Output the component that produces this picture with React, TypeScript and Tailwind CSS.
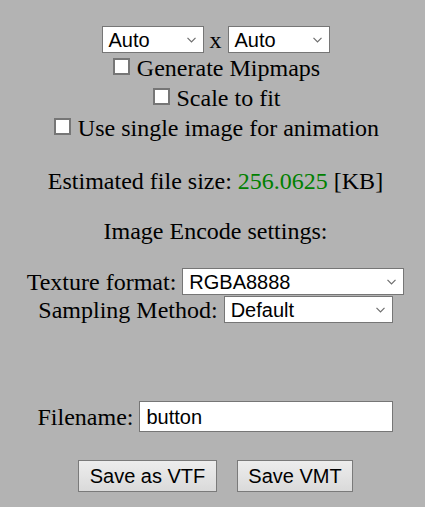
import React from 'react'

const serif = "font-['Liberation_Serif','Times_New_Roman',serif]"
const sans = "font-['Liberation_Sans',Arial,sans-serif]"

function Chevron() {
  return (
    <svg width="9" height="6" viewBox="0 0 9 6" className="shrink-0">
      <path d="M0.5 0.8 L4.5 4.8 L8.5 0.8" fill="none" stroke="#6e6e6e" strokeWidth="1.2" />
    </svg>
  )
}

function Select({ value, width }: { value: string; width: string }) {
  return (
    <div
      className={`flex h-[27px] items-center justify-between border border-[#767676] bg-white pl-[6px] pr-[7px] text-[20px] leading-none ${sans} ${width}`}
    >
      <span>{value}</span>
      <Chevron />
    </div>
  )
}

function Checkbox({ label }: { label: string }) {
  return (
    <div className="flex h-[30px] items-center justify-center gap-[7px] pl-[2px]">
      <span className="mb-[3px] h-[17px] w-[17px] border-2 border-[#767676] bg-white" />
      <span className="leading-none">{label}</span>
    </div>
  )
}

export default function App() {
  return (
    <div className={`min-h-[507px] bg-[#b3b3b3] pl-[6px] pt-[26px] text-[24px] text-black ${serif}`}>
      <div className="flex h-[27px] items-center justify-center gap-[6px]">
        <Select value="Auto" width="w-[102px]" />
        <span className="leading-none">x</span>
        <Select value="Auto" width="w-[102px]" />
      </div>

      <Checkbox label="Generate Mipmaps" />
      <Checkbox label="Scale to fit" />
      <Checkbox label="Use single image for animation" />

      <div className="mt-[23px] flex h-[30px] items-center justify-center leading-none">
        <span>
          Estimated file size: <span className="text-[#008000]">256.0625</span> [KB]
        </span>
      </div>

      <div className="mt-[20px] flex h-[30px] items-center justify-center leading-none">
        Image Encode settings:
      </div>

      <div className="mt-[22px] flex h-[27px] items-center justify-center gap-[6px]">
        <span className="leading-none">Texture format:</span>
        <Select value="RGBA8888" width="w-[222px]" />
      </div>
      <div className="mt-px flex h-[27px] items-center justify-center gap-[6px]">
        <span className="leading-none">Sampling Method:</span>
        <Select value="Default" width="w-[169px]" />
      </div>

      <div className="mt-[78px] flex h-[31px] items-center justify-center gap-[6px]">
        <span className="leading-none">Filename:</span>
        <div
          className={`flex h-[31px] w-[254px] items-center border border-[#767676] bg-white pl-[6px] text-[20px] leading-none ${sans}`}
        >
          button
        </div>
      </div>

      <div className={`mt-[28px] flex justify-center gap-[20px] text-[20px] ${sans}`}>
        <button className="h-[32px] w-[139px] border border-[#7a7a7a] bg-linear-to-b from-[#ededed] to-[#dadada] leading-none">
          Save as VTF
        </button>
        <button className="h-[32px] w-[116px] border border-[#7a7a7a] bg-linear-to-b from-[#ededed] to-[#dadada] leading-none">
          Save VMT
        </button>
      </div>
    </div>
  )
}
